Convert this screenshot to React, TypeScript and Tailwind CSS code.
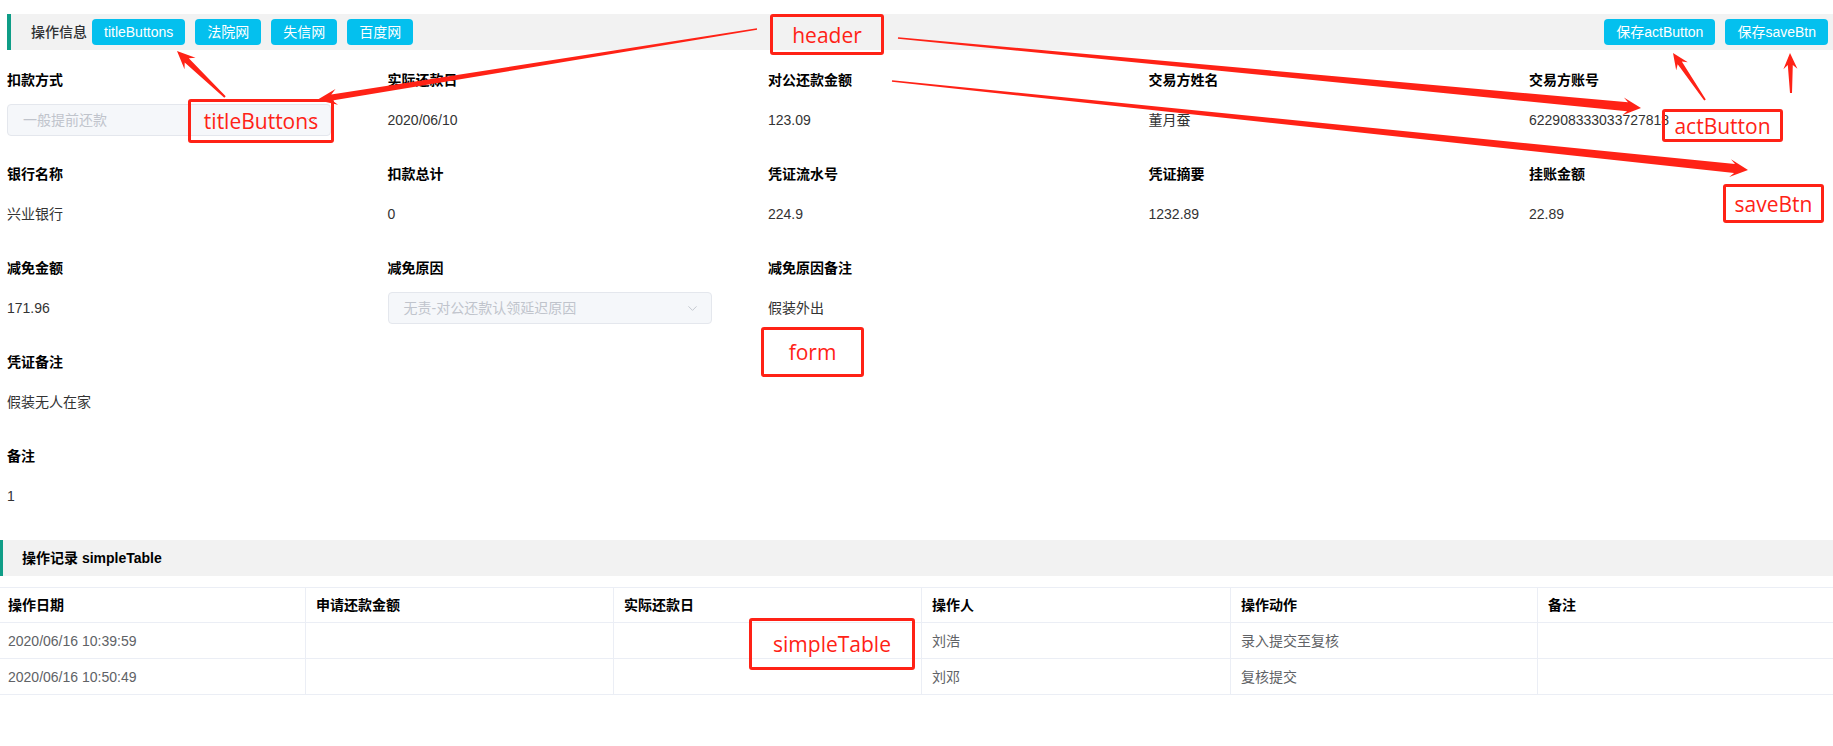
import React from "react";
import { ChevronDown } from "lucide-react";

type Item = { label: string; value?: string; select?: string };

const formRows: Item[][] = [
  [
    { label: "扣款方式", select: "一般提前还款" },
    { label: "实际还款日", value: "2020/06/10" },
    { label: "对公还款金额", value: "123.09" },
    { label: "交易方姓名", value: "董月蚕" },
    { label: "交易方账号", value: "622908333033727818" },
  ],
  [
    { label: "银行名称", value: "兴业银行" },
    { label: "扣款总计", value: "0" },
    { label: "凭证流水号", value: "224.9" },
    { label: "凭证摘要", value: "1232.89" },
    { label: "挂账金额", value: "22.89" },
  ],
  [
    { label: "减免金额", value: "171.96" },
    { label: "减免原因", select: "无责-对公还款认领延迟原因" },
    { label: "减免原因备注", value: "假装外出" },
  ],
  [{ label: "凭证备注", value: "假装无人在家" }],
  [{ label: "备注", value: "1" }],
];

const columns = ["操作日期", "申请还款金额", "实际还款日", "操作人", "操作动作", "备注"];
const records = [
  ["2020/06/16 10:39:59", "", "", "刘浩", "录入提交至复核", ""],
  ["2020/06/16 10:50:49", "", "", "刘邓", "复核提交", ""],
];

// annotation boxes drawn over the screenshot
const notes = [
  { text: "header", cls: "left-[770px] top-[14px] w-[114px] h-[41px]" },
  { text: "titleButtons", cls: "left-[188px] top-[99px] w-[146px] h-[44px]" },
  { text: "actButton", cls: "left-[1662px] top-[109px] w-[121px] h-[33px]" },
  { text: "saveBtn", cls: "left-[1723px] top-[184px] w-[101px] h-[39px]" },
  { text: "form", cls: "left-[761px] top-[327px] w-[103px] h-[50px]" },
  { text: "simpleTable", cls: "left-[749px] top-[618px] w-[166px] h-[52px]" },
];

// tail x,y  tip x,y  tail width, shaft width, head length, head width
const arrows: number[][] = [
  [757, 29, 317, 100, 1.5, 6, 20, 16],
  [225, 97, 177, 51, 2, 6, 18, 16],
  [898, 38, 1641, 108, 1.5, 9, 18, 18],
  [892, 81, 1748, 170, 1.5, 9, 18, 18],
  [1705, 100, 1673, 53, 2, 5, 16, 14],
  [1791, 93, 1790, 53, 2, 5, 16, 14],
];

function arrowPoints([tx, ty, hx, hy, w0, w1, hl, hw]: number[]) {
  const len = Math.hypot(hx - tx, hy - ty);
  const ux = (hx - tx) / len;
  const uy = (hy - ty) / len;
  const px = -uy;
  const py = ux;
  const sx = hx - ux * hl * 0.75;
  const sy = hy - uy * hl * 0.75;
  const bx = hx - ux * hl;
  const by = hy - uy * hl;
  const pts = [
    [tx + (px * w0) / 2, ty + (py * w0) / 2],
    [sx + (px * w1) / 2, sy + (py * w1) / 2],
    [bx + (px * hw) / 2, by + (py * hw) / 2],
    [hx, hy],
    [bx - (px * hw) / 2, by - (py * hw) / 2],
    [sx - (px * w1) / 2, sy - (py * w1) / 2],
    [tx - (px * w0) / 2, ty - (py * w0) / 2],
  ];
  return pts.map((p) => p.map((n) => n.toFixed(1)).join(",")).join(" ");
}

function DisabledSelect({ text }: { text: string }) {
  return (
    <div className="flex h-8 w-[324px] items-center justify-between rounded border border-[#e4e7ed] bg-[#f5f7fa] pl-[15px] pr-[11px] text-[#c0c4cc]">
      <span>{text}</span>
      <ChevronDown size={15} strokeWidth={1.5} />
    </div>
  );
}

function SectionTitle({ children, right }: { children: React.ReactNode; right?: React.ReactNode }) {
  return (
    <div className="flex h-9 items-center border-l-4 border-[#0f9d87] bg-[#f2f2f2] pl-5 pr-[5px]">
      {children}
      {right}
    </div>
  );
}

const btn = "h-[26px] rounded px-3 text-sm leading-[26px] text-white bg-[#04c0ee]";

export default function App() {
  return (
    <div className="relative h-[746px] w-full overflow-hidden bg-white font-['Liberation_Sans','Noto_Sans_CJK_SC',sans-serif] text-sm">
      <div className="pl-[7px] pt-[14px]">
        <SectionTitle
          right={
            <div className="ml-auto flex gap-[10px]">
              <button className={btn}>保存actButton</button>
              <button className={btn}>保存saveBtn</button>
            </div>
          }
        >
          <span className="font-medium text-[#303133]">操作信息</span>
          <div className="ml-[5px] flex gap-[10px]">
            <button className={btn}>titleButtons</button>
            <button className={btn}>法院网</button>
            <button className={btn}>失信网</button>
            <button className={btn}>百度网</button>
          </div>
        </SectionTitle>

        <div className="flex flex-col gap-[14px] pt-[10px]">
          {formRows.map((row, i) => (
            <div key={i} className="grid grid-cols-[repeat(4,380.5px)_1fr]">
              {row.map((it) => (
                <div key={it.label}>
                  <div className="h-10 font-bold leading-10 text-black">{it.label}</div>
                  <div className="flex h-10 items-center text-[#333]">
                    {it.select ? <DisabledSelect text={it.select} /> : it.value}
                  </div>
                </div>
              ))}
            </div>
          ))}
        </div>
      </div>

      <div className="mt-[24px]">
        <div className="flex h-9 items-center border-l-[3px] border-[#0f9d87] bg-[#f2f2f2] pl-[19px]">
          <span className="font-bold text-black">操作记录 simpleTable</span>
        </div>
        <div className="mt-[11px] border-t border-[#ebeef5]">
          <div className="grid h-[35px] grid-cols-[305px_308px_308px_309px_307px_1fr] border-b border-[#ebeef5]">
            {columns.map((c, i) => (
              <div
                key={c}
                className={`flex items-center font-bold text-black ${i === 0 ? "pl-2" : "border-l border-[#ebeef5] pl-[10px]"}`}
              >
                {c}
              </div>
            ))}
          </div>
          {records.map((r, ri) => (
            <div
              key={ri}
              className="grid h-9 grid-cols-[305px_308px_308px_309px_307px_1fr] border-b border-[#ebeef5]"
            >
              {r.map((v, i) => (
                <div
                  key={i}
                  className={`flex items-center text-[#606266] ${i === 0 ? "pl-2" : "border-l border-[#ebeef5] pl-[10px]"}`}
                >
                  {v}
                </div>
              ))}
            </div>
          ))}
        </div>
      </div>

      {/* annotations */}
      <svg className="pointer-events-none absolute inset-0 h-full w-full" width="1833" height="746">
        {arrows.map((a, i) => (
          <polygon key={i} points={arrowPoints(a)} fill="#ff2216" />
        ))}
      </svg>
      {notes.map((n) => (
        <div
          key={n.text}
          className={`pointer-events-none absolute flex items-center justify-center rounded-[3px] border-[3px] border-[#ff2216] font-['Open_Sans',sans-serif] text-[21px] text-[#ff2216] ${n.cls}`}
        >
          {n.text}
        </div>
      ))}
    </div>
  );
}
